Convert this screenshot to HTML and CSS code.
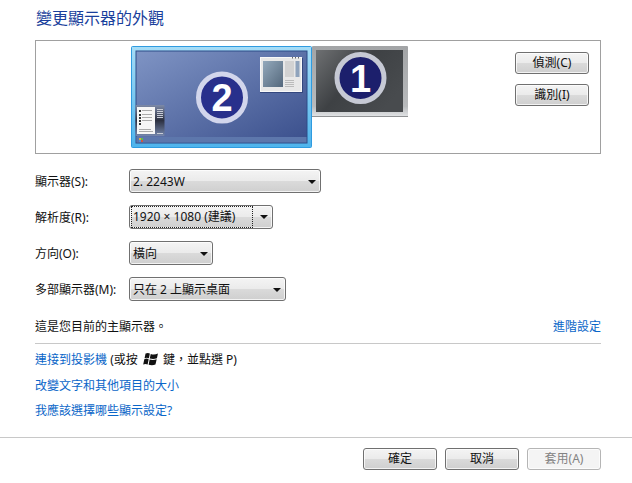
FILE: index.html
```html
<!DOCTYPE html>
<html lang="zh-Hant">
<head>
<meta charset="utf-8">
<title>變更顯示器的外觀</title>
<link rel="stylesheet" href="styles.css">
</head>
<body>
<main class="content">
  <h1 class="title">變更顯示器的外觀</h1>
  <section class="preview">
    <svg class="monitor monitor-two" viewBox="0 0 181 102" width="181" height="102">
      <defs>
        <linearGradient id="m2bg" x1="0" y1="0" x2="1" y2="1">
          <stop offset="0" stop-color="#7f94c4"/>
          <stop offset="1" stop-color="#3a4f8c"/>
        </linearGradient>
        <linearGradient id="m2frame" x1="0" y1="0" x2="0" y2="1">
          <stop offset="0" stop-color="#a6dcf6"/>
          <stop offset="1" stop-color="#4fb4ec"/>
        </linearGradient>
        <linearGradient id="pane" x1="0" y1="0" x2="1" y2="1">
          <stop offset="0" stop-color="#94a9bc"/>
          <stop offset="1" stop-color="#54687c"/>
        </linearGradient>
        <linearGradient id="gadget" x1="0" y1="0" x2="0" y2="1">
          <stop offset="0" stop-color="#7d8aa8"/>
          <stop offset="0.5" stop-color="#2c3040"/>
          <stop offset="1" stop-color="#7486ac"/>
        </linearGradient>
      </defs>
      <rect x="0.5" y="0.5" width="180" height="101" rx="1" fill="url(#m2frame)" stroke="#2f9be0"/>
      <rect x="5" y="5" width="171" height="92" fill="url(#m2bg)" stroke="#2d4d88"/>
      <rect x="5.5" y="91" width="170" height="5.5" fill="#5d77ac"/>
      <rect x="8" y="92" width="2" height="2" fill="#d8b040"/>
      <rect x="10" y="92" width="2" height="2" fill="#5fb850"/>
      <rect x="8" y="94" width="2" height="2" fill="#4f90d8"/>
      <rect x="10" y="94" width="2" height="2" fill="#d05840"/>
      <rect x="4.500" y="59" width="29" height="31" rx="1" fill="url(#gadget)"/>
      <rect x="6" y="61" width="18" height="27" fill="#f6f6f6"/>
      <g fill="#333"><rect x="8" y="64" width="2" height="2"/><rect x="8" y="68" width="2" height="2"/><rect x="8" y="71" width="2" height="2"/><rect x="8" y="74" width="2" height="2"/><rect x="8" y="77" width="2" height="2"/></g>
      <g fill="#aaa"><rect x="11" y="64" width="10" height="1"/><rect x="11" y="68" width="10" height="1"/><rect x="11" y="71" width="10" height="1"/><rect x="11" y="74" width="10" height="1"/><rect x="8" y="83" width="12" height="1"/><rect x="8" y="85" width="14" height="1"/></g>
      <g fill="#c8ccd6"><rect x="26" y="63" width="6" height="1"/><rect x="26" y="65" width="6" height="1"/><rect x="26" y="67" width="6" height="1"/><rect x="26" y="69" width="6" height="1"/><rect x="26" y="71" width="6" height="1"/><rect x="26" y="87" width="6" height="1"/></g>
      <rect x="129" y="12" width="43" height="35" fill="#33477e"/>
      <rect x="129.500" y="11.500" width="41" height="34" fill="#e8e8e8" stroke="#f8f8f8"/>
      <rect x="132" y="15" width="20" height="26" fill="url(#pane)"/>
      <rect x="154" y="15" width="9" height="16" fill="#d2d2d2"/>
      <rect x="164.500" y="15" width="4" height="16" fill="#8fa3bc"/>
      <g fill="#bbb"><rect x="154" y="34" width="9" height="1"/><rect x="154" y="36" width="9" height="1"/><rect x="154" y="38" width="9" height="1"/><rect x="154" y="40" width="9" height="1"/></g>
      <g fill="#666"><rect x="161" y="11" width="1" height="1.500"/><rect x="164" y="11" width="1" height="1.500"/><rect x="167" y="11" width="1" height="1.500"/></g>
      <circle cx="91" cy="51.500" r="23.500" fill="#28308c" stroke="#d2d6ec" stroke-width="5"/>
      <text class="digit" x="91" y="65" text-anchor="middle">2</text>
    </svg>
    <svg class="monitor monitor-one" viewBox="0 0 96 71" width="96" height="71">
      <defs>
        <linearGradient id="m1bg" x1="0" y1="0" x2="1" y2="0.6">
          <stop offset="0" stop-color="#6e7072"/>
          <stop offset="0.5" stop-color="#3e4144"/>
          <stop offset="1" stop-color="#484b4e"/>
        </linearGradient>
        <linearGradient id="m1frame" x1="0" y1="0" x2="0" y2="1">
          <stop offset="0" stop-color="#a2a4a6"/>
          <stop offset="0.85" stop-color="#b8babc"/>
          <stop offset="1" stop-color="#e4e6e8"/>
        </linearGradient>
      </defs>
      <rect x="0" y="0" width="96" height="71" rx="1" fill="url(#m1frame)"/>
      <rect x="0" y="70" width="96" height="1" fill="#909294"/>
      <rect x="4" y="4" width="87" height="62" fill="url(#m1bg)"/>
      <circle cx="48.500" cy="32" r="23.500" fill="#1c1f6c" stroke="#c6c9d4" stroke-width="5"/>
      <text class="digit" x="48.500" y="45.500" text-anchor="middle">1</text>
    </svg>
    <div class="preview-actions">
      <button class="btn" type="button">偵測(C)</button>
      <button class="btn" type="button">識別(I)</button>
    </div>
  </section>

  <div class="form">
    <div class="row"><span class="label">顯示器(S):</span><div class="combo combo-display"><span>2. 2243W</span><i class="arrow"></i></div></div>
    <div class="row"><span class="label">解析度(R):</span><div class="combo combo-res"><span class="focus">1920 × 1080 (建議)</span><i class="arrow"></i></div></div>
    <div class="row"><span class="label">方向(O):</span><div class="combo combo-orient"><span>橫向</span><i class="arrow"></i></div></div>
    <div class="row"><span class="label">多部顯示器(M):</span><div class="combo combo-multi"><span>只在 2 上顯示桌面</span><i class="arrow"></i></div></div>
  </div>

  <div class="status">
    <span>這是您目前的主顯示器。</span>
    <a class="link">進階設定</a>
  </div>

  <div class="links">
    <p class="link-row"><a class="link">連接到投影機</a> (或按
      <svg class="winkey" viewBox="1 1 12 10.500" width="15" height="13"><path fill="#111" d="M3 1.500Q5 .5 6.500 1.500L5.700 5.300Q4 4.300 2.200 5.300ZM7.200 1.800Q10 2.800 13 1.500L12.200 5.300Q9.500 6.200 6.400 5.500ZM2 6Q4 5 5.500 6.100L4.700 10.300Q3 9.300 1.100 10.300ZM6.300 6.300Q9.500 7 12 6L11 10.300Q8.500 11.300 5.500 10.500Z"/></svg>
      鍵，並點選 P)</p>
    <p class="link-row"><a class="link">改變文字和其他項目的大小</a></p>
    <p class="link-row"><a class="link">我應該選擇哪些顯示設定?</a></p>
  </div>
</main>

<footer class="footer">
  <button class="btn" type="button">確定</button>
  <button class="btn" type="button">取消</button>
  <button class="btn btn-disabled" type="button" disabled>套用(A)</button>
</footer>
</body>
</html>
```

FILE: styles.css
```css
* { box-sizing: border-box; }

html, body { height: 100%; }

body {
  margin: 0;
  width: 632px;
  height: 483px;
  overflow: hidden;
  display: flex;
  flex-direction: column;
  background: #fff;
  color: #111;
  font: 12px/16px "Noto Sans", "Noto Sans CJK TC", sans-serif;
}

.content {
  flex: 0 0 437px;
  padding: 0 31px 0 35px;
}

.title {
  margin: 0;
  padding: 8px 0 0 1px;
  height: 40px;
  font-size: 16px;
  line-height: 21px;
  font-weight: 400;
  color: #1a3f9c;
}

.preview {
  position: relative;
  height: 114px;
  border: 1px solid #a0a0a0;
  display: flex;
  justify-content: flex-end;
  padding: 11px 11px 0 0;
}

.monitor { position: absolute; display: block; }
.monitor-two { left: 95px; top: 5px; }
.monitor-one { left: 276px; top: 5px; }

.digit {
  font: 700 38px "Liberation Sans", sans-serif;
  fill: #fff;
}

.preview-actions {
  display: flex;
  flex-direction: column;
  gap: 10px;
}

.btn {
  width: 74px;
  height: 22px;
  padding: 0;
  border: 1px solid #707070;
  border-radius: 3px;
  background: linear-gradient(#f4f4f4 0, #ebebeb 48%, #dadada 52%, #cfcfcf 100%);
  box-shadow: inset 0 0 0 1px rgba(255, 255, 255, .75);
  color: #111;
  font: 12px/18px "Noto Sans", "Noto Sans CJK TC", sans-serif;
}

.btn-disabled {
  border-color: #b5b5b5;
  background: #f4f4f4;
  color: #838383;
}

.form {
  display: flex;
  flex-direction: column;
  gap: 12px;
  margin-top: 15px;
}

.row {
  display: flex;
  align-items: center;
  height: 24px;
}

.label {
  width: 94px;
  flex: none;
  padding-top: 2px;
}

.combo {
  height: 24px;
  display: flex;
  align-items: center;
  justify-content: space-between;
  padding: 2px 4px 0 3px;
  border: 1px solid #707070;
  border-radius: 3px;
  background: linear-gradient(#f4f4f4 0, #ebebeb 48%, #dadada 52%, #cfcfcf 100%);
  box-shadow: inset 0 0 0 1px rgba(255, 255, 255, .75);
  white-space: nowrap;
}

.combo-display { width: 192px; }
.combo-res { width: 144px; padding: 0 4px 0 2px; }
.combo-orient { width: 84px; }
.combo-multi { width: 157px; }

.focus {
  outline: 1px dotted #222;
  width: 120px;
  height: 20px;
  line-height: 20px;
  padding-left: 1px;
}

.arrow {
  flex: none;
  width: 0;
  height: 0;
  border: 4px solid transparent;
  border-top: 4px solid #111;
  border-bottom: 0;
}

.status {
  display: flex;
  justify-content: space-between;
  align-items: center;
  height: 34px;
  margin-top: 8px;
  padding-top: 2px;
}

.links {
  border-top: 1px solid #c8c8c8;
  padding-top: 8px;
}

.link-row {
  margin: 0 0 9.500px;
  height: 16px;
  white-space: nowrap;
}

.link { color: #0a66c8; }

.winkey {
  display: inline-block;
  vertical-align: -2px;
  margin: 0 2px;
}

.footer {
  flex: 1;
  display: flex;
  justify-content: flex-end;
  gap: 8px;
  padding: 10px 31px 0 0;
  border-top: 1px solid #c8c8c8;
}
```
